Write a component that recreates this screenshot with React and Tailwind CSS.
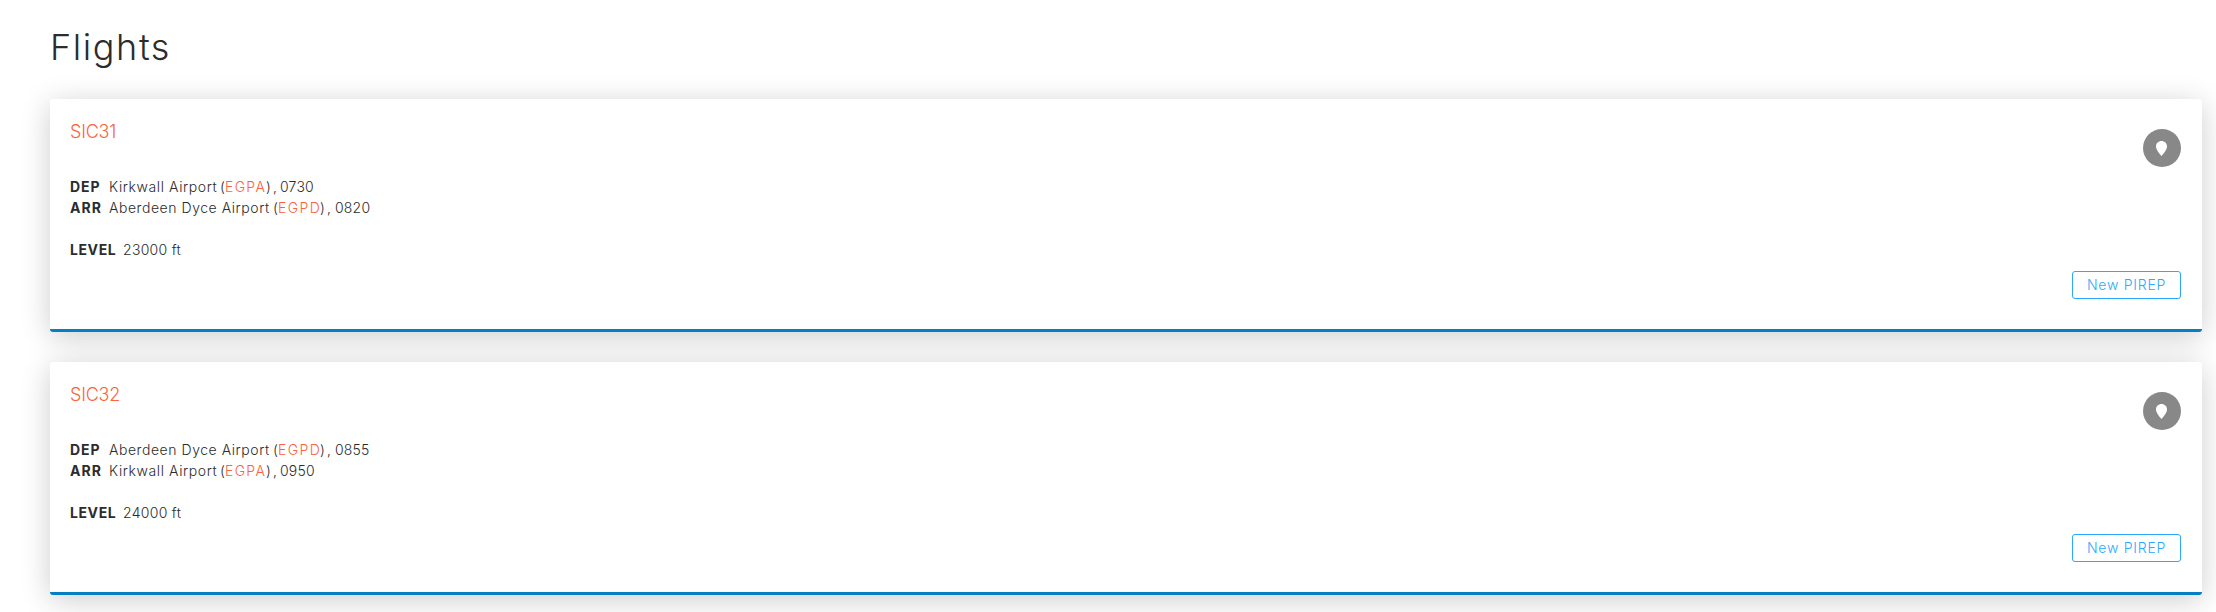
const flights = [
  {
    id: 'SIC31',
    dep: { name: 'Kirkwall Airport', code: 'EGPA', time: '0730' },
    arr: { name: 'Aberdeen Dyce Airport', code: 'EGPD', time: '0820' },
    level: '23000 ft',
  },
  {
    id: 'SIC32',
    dep: { name: 'Aberdeen Dyce Airport', code: 'EGPD', time: '0855' },
    arr: { name: 'Kirkwall Airport', code: 'EGPA', time: '0950' },
    level: '24000 ft',
  },
];

function Leg({ label, airport }) {
  const long = airport.code === 'EGPD';
  return (
    <div className="flex whitespace-pre">
      <b className="w-[39px] font-bold tracking-[1px]">{label}</b>
      <span className={long ? 'w-[164px] tracking-[0.55px]' : 'w-[111px] tracking-[0.6px]'}>{airport.name}</span>
      <span className="w-[5px]">(</span>
      <a className={long ? 'w-[42px] tracking-[1.4px] text-[#fb6340]' : 'w-[41px] tracking-[1.3px] text-[#fb6340]'}>
        {airport.code}
      </a>
      <span className="w-[7px]">)</span>
      <span className={long ? 'w-[8px]' : 'w-[7px]'}>,</span>
      <span className="tracking-[0.2px]">{airport.time}</span>
    </div>
  );
}

function FlightCard({ flight }) {
  return (
    <article className="flex h-[233px] justify-between rounded-[3px] border-b-[3px] border-[#067ec1] bg-white pr-[21px] pl-5 shadow-[0px_5px_30px_0px_rgba(0,0,0,0.2)]">
      <div className="pt-5 text-[14px] leading-[21px] font-light">
        <h5 className="mb-8 text-[18px] leading-[25px] font-light tracking-[-0.2px] text-[#fb6340]">{flight.id}</h5>
        <Leg label="DEP" airport={flight.dep} />
        <Leg label="ARR" airport={flight.arr} />
        <div className="mt-[21px] flex">
          <b className="w-[53px] font-bold tracking-[0.6px]">LEVEL</b>
          <span className="tracking-[0.3px]">{flight.level}</span>
        </div>
      </div>
      <div className="flex flex-col items-end pt-[30px]">
        <button className="flex size-[38px] items-center justify-center rounded-full bg-[#888888]">
          <svg className="mr-px h-[15px] w-[11px]" viewBox="0 0 11 15" fill="#fff">
            <path d="M5.5 0C2.45 0 0 2.4 0 5.4C0 8.8 3.4 12.2 5.5 15C7.6 12.2 11 8.8 11 5.4C11 2.4 8.55 0 5.5 0Z" />
          </svg>
        </button>
        <button className="mt-[104px] h-[28px] w-[109px] rounded-[3px] border border-[#2ca8ff] text-[14px] leading-[24px] font-light tracking-[0.75px] text-[#2ca8ff]">
          New PIREP
        </button>
      </div>
    </article>
  );
}

export default function App() {
  return (
    <main className="h-[612px] overflow-hidden bg-white pr-[14px] pl-[50px] pt-[24px] font-['Inter',sans-serif] text-[#2c2c2c]">
      <h2 className="mb-[30px] h-[45px] text-[36px] leading-[47px] font-light tracking-[1.6px]">Flights</h2>
      <div className="flex flex-col gap-[30px]">
        {flights.map((flight) => (
          <FlightCard key={flight.id} flight={flight} />
        ))}
      </div>
    </main>
  );
}
